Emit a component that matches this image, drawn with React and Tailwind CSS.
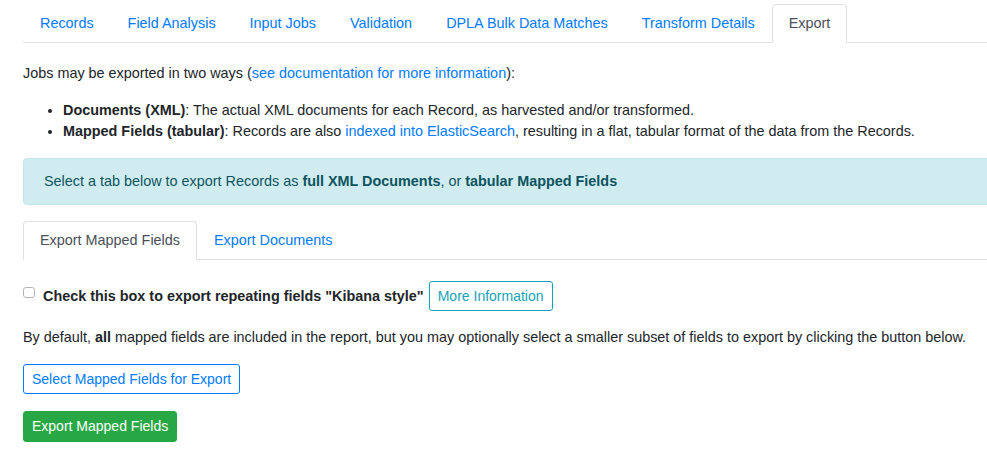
import React from "react";

const mainTabs = [
  "Records",
  "Field Analysis",
  "Input Jobs",
  "Validation",
  "DPLA Bulk Data Matches",
  "Transform Details",
  "Export",
];

function Tab({ label, active }) {
  return (
    <li className="-mb-px">
      <span
        className={
          "block px-4 py-2 border rounded-t-[4px] leading-[21px] " +
          (active
            ? "bg-white border-[#dee2e6] border-b-white text-[#495057]"
            : "border-transparent text-[#007bff]")
        }
      >
        {label}
      </span>
    </li>
  );
}

export default function App() {
  return (
    <div
      className="w-full overflow-hidden bg-white text-[14.4px] leading-[21px] text-[#212529]"
      style={{ fontFamily: '"Liberation Sans", Arial, Helvetica, sans-serif' }}
    >
      <div className="w-[1020px] pl-[23px] pt-1">
        <ul className="flex border-b border-[#dee2e6]">
          {mainTabs.map((t) => (
            <Tab key={t} label={t} active={t === "Export"} />
          ))}
        </ul>

        <p className="mt-[20px] mb-4">
          Jobs may be exported in two ways (
          <span className="text-[#007bff]">see documentation for more information</span>):
        </p>

        <ul className="list-disc pl-10 mb-4">
          <li>
            <b>Documents (XML)</b>: The actual XML documents for each Record, as harvested
            and/or transformed.
          </li>
          <li>
            <b>Mapped Fields (tabular)</b>: Records are also{" "}
            <span className="text-[#007bff]">indexed into ElasticSearch</span>, resulting in a
            flat, tabular format of the data from the Records.
          </li>
        </ul>

        <div className="mb-4 px-5 py-3 border border-[#bee5eb] bg-[#d1ecf1] text-[#0c5460] rounded-[4px]">
          Select a tab below to export Records as <b>full XML Documents</b>, or{" "}
          <b>tabular Mapped Fields</b>
        </div>

        <ul className="flex border-b border-[#dee2e6]">
          <Tab label="Export Mapped Fields" active />
          <Tab label="Export Documents" />
        </ul>

        <div className="mt-[21px] flex items-center h-[30px]">
          <span className="w-[12px] h-[11px] mb-[8px] border border-[#b5b5b5] rounded-[3px] bg-white shrink-0" />
          <span className="ml-[8px] font-bold">
            Check this box to export repeating fields "Kibana style"
          </span>
          <span className="ml-[5px] h-[30px] px-2 border border-[#17a2b8] text-[#17a2b8] text-[14px] rounded-[3px] leading-[28px]">
            More Information
          </span>
        </div>

        <p className="mt-4 mb-4">
          By default, <b>all</b> mapped fields are included in the report, but you may
          optionally select a smaller subset of fields to export by clicking the button below.
        </p>

        <div className="flex">
          <span className="h-[30px] px-2 border border-[#007bff] text-[#007bff] text-[14px] rounded-[3px] leading-[28px]">
            Select Mapped Fields for Export
          </span>
        </div>

        <div className="flex mt-[17px]">
          <span className="h-[31px] px-2 border border-[#28a745] bg-[#28a745] text-white text-[14px] rounded-[3px] leading-[29px]">
            Export Mapped Fields
          </span>
        </div>
      </div>
    </div>
  );
}
